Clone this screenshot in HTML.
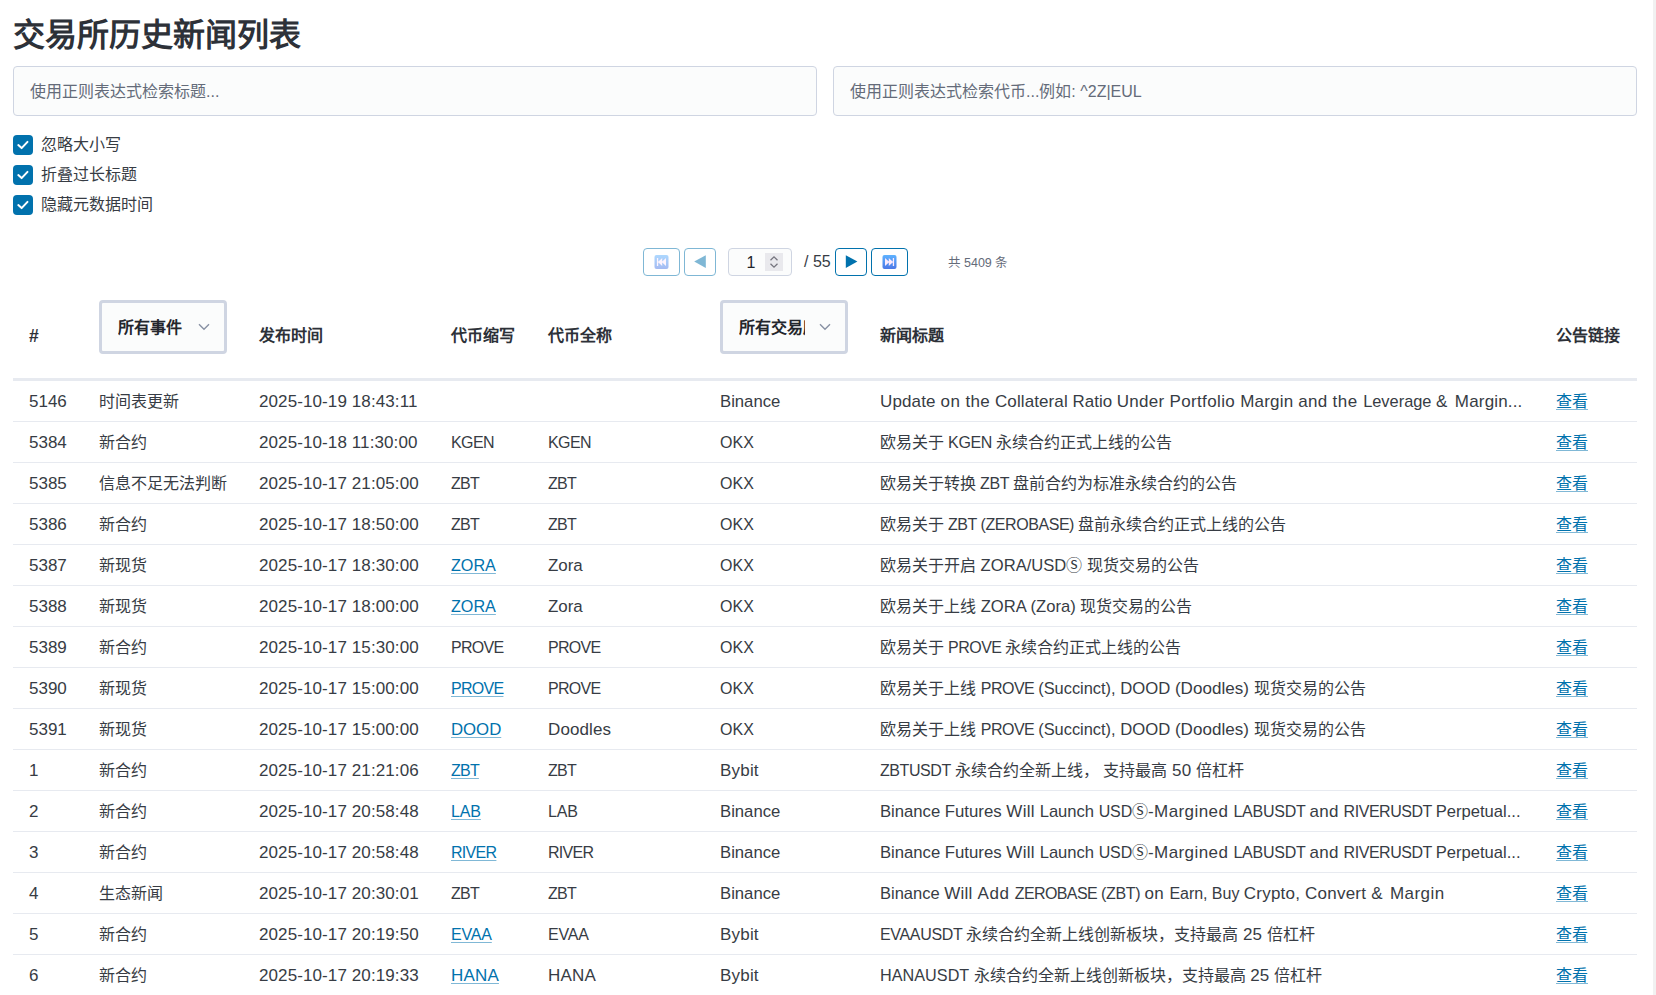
<!DOCTYPE html>
<html lang="zh-CN">
<head>
<meta charset="utf-8">
<title>交易所历史新闻列表</title>
<style>
*{box-sizing:border-box;}
html,body{margin:0;padding:0;background:#fff;}
body{width:1656px;height:995px;overflow:hidden;position:relative;font-family:"Liberation Sans",sans-serif;font-size:16px;color:#373c44;}
.sb{position:absolute;left:1653px;top:0;width:3px;height:995px;background:#f1f1f1;}
h1{position:absolute;left:13px;top:15px;margin:0;font-size:32px;line-height:40px;font-weight:700;color:#2d3138;white-space:nowrap;}
.inp{position:absolute;top:66px;width:804px;height:50px;border:1px solid #cfd5e2;border-radius:4px;background:#fbfcfc;color:#646b79;font-size:16px;line-height:48px;padding:1px 16px 0;white-space:nowrap;overflow:hidden;}
.ck{position:absolute;left:13px;height:20px;white-space:nowrap;}
.ck i{position:absolute;left:0;top:0;width:20px;height:20px;border-radius:4px;background:#0172ad;display:block;}
.ck i svg{position:absolute;left:0;top:0;}
.ck>span{position:absolute;left:28px;top:-2px;line-height:24px;font-size:16px;}
.pg{position:absolute;top:248px;height:28px;}
.btn{border:1px solid #0172ad;border-radius:4px;background:#fff;}
.btn.dis{opacity:.5;}
.btn svg{position:absolute;left:0;top:0;}
.num{border:1px solid #cfd5e2;border-radius:4px;background:#fbfcfc;}
table{position:absolute;left:13px;top:292px;width:1624px;border-collapse:separate;border-spacing:0;table-layout:fixed;}
th,td{padding:2px 16px 0;text-align:left;white-space:nowrap;overflow:hidden;font-size:16px;}
.l{font-size:17px;white-space:pre;line-height:0;}
.c{display:inline-block;white-space:nowrap;text-align:justify;text-align-last:justify;}
th{height:89px;border-bottom:3px solid #e7eaf0;font-weight:700;font-size:16px;color:#2d3138;vertical-align:top;position:relative;}
td{height:41px;border-bottom:1px solid #e7eaf0;line-height:24px;vertical-align:middle;}
a,a .c{color:#0172ad;text-decoration:underline;text-decoration-color:rgba(1,114,173,.5);text-underline-offset:2px;}
.sel{position:absolute;left:16px;top:8px;width:128px;height:54px;border:3px solid #cfd5e2;border-radius:4px;background:#fbfcfc;}
.sel>span{color:#23262c;position:absolute;left:16px;top:13px;line-height:24px;white-space:nowrap;overflow:hidden;}
.sel svg{position:absolute;left:96px;top:20.4px;}
.ht{position:absolute;left:16px;top:32px;line-height:24px;}
</style>
</head>
<body>
<div class="sb"></div>
<h1><span class="c" style="width:288px">交易所历史新闻列表</span></h1>
<div class="inp" style="left:13px"><span class="c" style="width:176px">使用正则表达式检索标题</span>...</div>
<div class="inp" style="left:833px"><span class="c" style="width:176px">使用正则表达式检索代币</span>...<span class="c" style="width:32px">例如</span>: ^2Z|EUL</div>

<div class="ck" style="top:135px"><i><svg width="20" height="20" viewBox="0 0 20 20"><path d="M5.3 10.1l3.3 3 5.9-6.2" fill="none" stroke="#fff" stroke-width="2" stroke-linecap="round" stroke-linejoin="round"/></svg></i><span><span class="c" style="width:80px">忽略大小写</span></span></div>
<div class="ck" style="top:165px"><i><svg width="20" height="20" viewBox="0 0 20 20"><path d="M5.3 10.1l3.3 3 5.9-6.2" fill="none" stroke="#fff" stroke-width="2" stroke-linecap="round" stroke-linejoin="round"/></svg></i><span><span class="c" style="width:96px">折叠过长标题</span></span></div>
<div class="ck" style="top:195px"><i><svg width="20" height="20" viewBox="0 0 20 20"><path d="M5.3 10.1l3.3 3 5.9-6.2" fill="none" stroke="#fff" stroke-width="2" stroke-linecap="round" stroke-linejoin="round"/></svg></i><span><span class="c" style="width:112px">隐藏元数据时间</span></span></div>

<!-- pagination -->
<div class="pg btn dis" style="left:643px;width:37px"><svg width="37" height="28" viewBox="0 0 37 28"><defs><linearGradient id="g1" x1="0" y1="0" x2="0" y2="1"><stop offset="0" stop-color="#5eb2ff"/><stop offset="1" stop-color="#4d78e6"/></linearGradient></defs><rect x="10.5" y="6" width="14" height="14" rx="2" fill="url(#g1)"/><path d="M12.9 8.9h1.3v8.1h-1.3zM18.2 8.9v8.1l-4.3-4.05zM22 8.9v8.1l-4.3-4.05z" fill="#fdeafc"/></svg></div>
<div class="pg btn dis" style="left:684px;width:32px"><svg width="32" height="28" viewBox="0 0 32 28"><path d="M20.8 6.2v12.8l-11.6-6.4z" fill="#0172ad"/></svg></div>
<div class="pg num" style="left:728px;width:64px"><span style="position:absolute;left:17.5px;top:2px;line-height:24px;font-size:16px;color:#23262c">1</span><svg style="position:absolute;left:36px;top:4px" width="18" height="18" viewBox="0 0 18 18"><rect width="18" height="18" fill="#e9e9ed"/><path d="M5.5 7.2L9 3.8l3.5 3.4M5.5 10.8L9 14.2l3.5-3.4" fill="none" stroke="#75757e" stroke-width="1.3"/></svg></div>
<div class="pg" style="left:804px;width:30px;line-height:28px;font-size:16px;white-space:nowrap">/ 55</div>
<div class="pg btn" style="left:835px;width:32px"><svg width="32" height="28" viewBox="0 0 32 28"><path d="M9.8 6.2v12.8l11.6-6.4z" fill="#0172ad"/></svg></div>
<div class="pg btn" style="left:871px;width:37px"><svg width="37" height="28" viewBox="0 0 37 28"><rect x="10.5" y="6" width="14" height="14" rx="2" fill="url(#g1)"/><path d="M22.1 8.9h-1.3v8.1h1.3zM16.8 8.9v8.1l4.3-4.05zM13 8.9v8.1l4.3-4.05z" fill="#fdeafc"/></svg></div>
<div class="pg" style="left:948px;width:70px;line-height:30px;font-size:12.5px;color:#646b79;white-space:nowrap"><span class="c" style="width:12.5px">共</span> 5409 <span class="c" style="width:12.5px">条</span></div>

<table>
<colgroup><col style="width:70px"><col style="width:160px"><col style="width:192px"><col style="width:97px"><col style="width:172px"><col style="width:160px"><col style="width:676px"><col style="width:97px"></colgroup>
<thead><tr>
<th><div class="ht" style="font-size:17.5px">#</div></th>
<th><div class="sel"><span style="width:70px"><span class="c" style="width:64px">所有事件</span></span><svg width="12" height="8" viewBox="0 0 12 8"><path d="M1 1.2l5 5 5-5" fill="none" stroke="#8891a4" stroke-width="1.4"/></svg></div></th>
<th><div class="ht"><span class="c" style="width:64px">发布时间</span></div></th>
<th><div class="ht"><span class="c" style="width:64px">代币缩写</span></div></th>
<th><div class="ht"><span class="c" style="width:64px">代币全称</span></div></th>
<th><div class="sel"><span style="width:66px"><span class="c" style="width:80px">所有交易所</span></span><svg width="12" height="8" viewBox="0 0 12 8"><path d="M1 1.2l5 5 5-5" fill="none" stroke="#8891a4" stroke-width="1.4"/></svg></div></th>
<th><div class="ht"><span class="c" style="width:64px">新闻标题</span></div></th>
<th><div class="ht"><span class="c" style="width:64px">公告链接</span></div></th>
</tr></thead>
<tbody>
<tr><td><span class="l">5146</span></td><td><span class="c" style="width:80px">时间表更新</span></td><td><span class="l" style="letter-spacing:.1px">2025-10-19 18:43:11</span></td><td></td><td></td><td><span class="l" style="font-size:16.7px">Binance</span></td><td><span class="l" style="font-size:17px;letter-spacing:0.14px">Update </span><span class="l" style="font-size:17px;letter-spacing:0.42px">on </span><span class="l" style="font-size:17px;letter-spacing:0.29px">the </span><span class="l" style="font-size:17px;letter-spacing:0.10px">Collateral </span><span class="l" style="font-size:16.9px">Ratio </span><span class="l" style="font-size:17px;letter-spacing:0.28px">Under </span><span class="l" style="font-size:17px;letter-spacing:0.37px">Portfolio </span><span class="l" style="font-size:17px;letter-spacing:0.20px">Margin </span><span class="l" style="font-size:17px;letter-spacing:0.25px">and </span><span class="l" style="font-size:17px;letter-spacing:0.59px">the </span><span class="l" style="font-size:16.4px">Leverage </span><span class="l" style="font-size:17px;letter-spacing:1.36px">&amp; </span><span class="l" style="font-size:17px;letter-spacing:0.17px">Margin...</span></td><td><a><span class="c" style="width:32px">查看</span></a></td></tr>
<tr><td><span class="l">5384</span></td><td><span class="c" style="width:48px">新合约</span></td><td><span class="l" style="letter-spacing:.1px">2025-10-18 11:30:00</span></td><td><span class="l" style="font-size:16px;letter-spacing:-0.61px">KGEN</span></td><td><span class="l" style="font-size:16px;letter-spacing:-0.61px">KGEN</span></td><td><span class="l" style="font-size:16px;letter-spacing:0.03px">OKX</span></td><td><span class="c" style="width:64px">欧易关于</span><span class="l" style="font-size:16px;letter-spacing:-0.37px"> KGEN </span><span class="c" style="width:176px">永续合约正式上线的公告</span></td><td><a><span class="c" style="width:32px">查看</span></a></td></tr>
<tr><td><span class="l">5385</span></td><td><span class="c" style="width:128px">信息不足无法判断</span></td><td><span class="l" style="letter-spacing:.1px">2025-10-17 21:05:00</span></td><td><span class="l" style="font-size:16px;letter-spacing:-0.77px">ZBT</span></td><td><span class="l" style="font-size:16px;letter-spacing:-0.77px">ZBT</span></td><td><span class="l" style="font-size:16px;letter-spacing:0.03px">OKX</span></td><td><span class="c" style="width:96px">欧易关于转换</span><span class="l" style="font-size:16px;letter-spacing:-0.37px"> ZBT </span><span class="c" style="width:224px">盘前合约为标准永续合约的公告</span></td><td><a><span class="c" style="width:32px">查看</span></a></td></tr>
<tr><td><span class="l">5386</span></td><td><span class="c" style="width:48px">新合约</span></td><td><span class="l" style="letter-spacing:.1px">2025-10-17 18:50:00</span></td><td><span class="l" style="font-size:16px;letter-spacing:-0.77px">ZBT</span></td><td><span class="l" style="font-size:16px;letter-spacing:-0.77px">ZBT</span></td><td><span class="l" style="font-size:16px;letter-spacing:0.03px">OKX</span></td><td><span class="c" style="width:64px">欧易关于</span><span class="l" style="font-size:16px;letter-spacing:-0.44px"> ZBT (ZEROBASE) </span><span class="c" style="width:208px">盘前永续合约正式上线的公告</span></td><td><a><span class="c" style="width:32px">查看</span></a></td></tr>
<tr><td><span class="l">5387</span></td><td><span class="c" style="width:48px">新现货</span></td><td><span class="l" style="letter-spacing:.1px">2025-10-17 18:30:00</span></td><td><a><span class="l" style="font-size:16.2px;letter-spacing:-0.03px">ZORA</span></a></td><td><span class="l" style="font-size:16.9px">Zora</span></td><td><span class="l" style="font-size:16px;letter-spacing:0.03px">OKX</span></td><td><span class="c" style="width:96px">欧易关于开启</span><span class="l" style="font-size:16.6px"> ZORA/USD</span><span class="c" style="width:16px">Ⓢ</span><span class="l"> </span><span class="c" style="width:112px">现货交易的公告</span></td><td><a><span class="c" style="width:32px">查看</span></a></td></tr>
<tr><td><span class="l">5388</span></td><td><span class="c" style="width:48px">新现货</span></td><td><span class="l" style="letter-spacing:.1px">2025-10-17 18:00:00</span></td><td><a><span class="l" style="font-size:16.2px;letter-spacing:-0.03px">ZORA</span></a></td><td><span class="l" style="font-size:16.9px">Zora</span></td><td><span class="l" style="font-size:16px;letter-spacing:0.03px">OKX</span></td><td><span class="c" style="width:96px">欧易关于上线</span><span class="l" style="font-size:16.6px;letter-spacing:0.02px"> ZORA (Zora) </span><span class="c" style="width:112px">现货交易的公告</span></td><td><a><span class="c" style="width:32px">查看</span></a></td></tr>
<tr><td><span class="l">5389</span></td><td><span class="c" style="width:48px">新合约</span></td><td><span class="l" style="letter-spacing:.1px">2025-10-17 15:30:00</span></td><td><span class="l" style="font-size:16px;letter-spacing:-0.72px">PROVE</span></td><td><span class="l" style="font-size:16px;letter-spacing:-0.72px">PROVE</span></td><td><span class="l" style="font-size:16px;letter-spacing:0.03px">OKX</span></td><td><span class="c" style="width:64px">欧易关于</span><span class="l" style="font-size:16px;letter-spacing:-0.49px"> PROVE </span><span class="c" style="width:176px">永续合约正式上线的公告</span></td><td><a><span class="c" style="width:32px">查看</span></a></td></tr>
<tr><td><span class="l">5390</span></td><td><span class="c" style="width:48px">新现货</span></td><td><span class="l" style="letter-spacing:.1px">2025-10-17 15:00:00</span></td><td><a><span class="l" style="font-size:16px;letter-spacing:-0.72px">PROVE</span></a></td><td><span class="l" style="font-size:16px;letter-spacing:-0.72px">PROVE</span></td><td><span class="l" style="font-size:16px;letter-spacing:0.03px">OKX</span></td><td><span class="c" style="width:96px">欧易关于上线</span><span class="l" style="font-size:17px;letter-spacing:0.07px"> </span><span class="l" style="font-size:16px;letter-spacing:-0.51px">PROVE </span><span class="l" style="font-size:16.4px">(Succinct), </span><span class="l" style="font-size:16.7px">DOOD </span><span class="l" style="font-size:17px;letter-spacing:0.04px">(Doodles) </span><span class="c" style="width:112px">现货交易的公告</span></td><td><a><span class="c" style="width:32px">查看</span></a></td></tr>
<tr><td><span class="l">5391</span></td><td><span class="c" style="width:48px">新现货</span></td><td><span class="l" style="letter-spacing:.1px">2025-10-17 15:00:00</span></td><td><a><span class="l" style="font-size:16.8px;letter-spacing:-0.03px">DOOD</span></a></td><td><span class="l" style="font-size:17px;letter-spacing:0.12px">Doodles</span></td><td><span class="l" style="font-size:16px;letter-spacing:0.03px">OKX</span></td><td><span class="c" style="width:96px">欧易关于上线</span><span class="l" style="font-size:17px;letter-spacing:0.07px"> </span><span class="l" style="font-size:16px;letter-spacing:-0.51px">PROVE </span><span class="l" style="font-size:16.4px">(Succinct), </span><span class="l" style="font-size:16.7px">DOOD </span><span class="l" style="font-size:17px;letter-spacing:0.04px">(Doodles) </span><span class="c" style="width:112px">现货交易的公告</span></td><td><a><span class="c" style="width:32px">查看</span></a></td></tr>
<tr><td><span class="l">1</span></td><td><span class="c" style="width:48px">新合约</span></td><td><span class="l" style="letter-spacing:.1px">2025-10-17 21:21:06</span></td><td><a><span class="l" style="font-size:16px;letter-spacing:-0.77px">ZBT</span></a></td><td><span class="l" style="font-size:16px;letter-spacing:-0.77px">ZBT</span></td><td><span class="l" style="font-size:17px;letter-spacing:0.20px">Bybit</span></td><td><span class="l" style="font-size:16px;letter-spacing:-0.43px">ZBTUSDT </span><span class="c" style="width:144px">永续合约全新上线，</span><span class="l"> </span><span class="c" style="width:64px">支持最高</span><span class="l" style="font-size:17px;letter-spacing:0.16px"> 50 </span><span class="c" style="width:48px">倍杠杆</span></td><td><a><span class="c" style="width:32px">查看</span></a></td></tr>
<tr><td><span class="l">2</span></td><td><span class="c" style="width:48px">新合约</span></td><td><span class="l" style="letter-spacing:.1px">2025-10-17 20:58:48</span></td><td><a><span class="l" style="font-size:16px;letter-spacing:-0.12px">LAB</span></a></td><td><span class="l" style="font-size:16px;letter-spacing:-0.12px">LAB</span></td><td><span class="l" style="font-size:16.7px">Binance</span></td><td><span class="l" style="font-size:16.7px;letter-spacing:-0.02px">Binance </span><span class="l" style="font-size:16.8px">Futures </span><span class="l" style="font-size:17px;letter-spacing:0.24px">Will </span><span class="l" style="font-size:16.6px">Launch </span><span class="l" style="font-size:16px;letter-spacing:-0.16px">USD</span><span class="c" style="width:16px">Ⓢ</span><span class="l" style="font-size:17px;letter-spacing:0.41px">-Margined </span><span class="l" style="font-size:16px;letter-spacing:-0.22px">LABUSDT </span><span class="l" style="font-size:17px;letter-spacing:0.23px">and </span><span class="l" style="font-size:16px;letter-spacing:-0.46px">RIVERUSDT </span><span class="l" style="font-size:16.6px">Perpetual...</span></td><td><a><span class="c" style="width:32px">查看</span></a></td></tr>
<tr><td><span class="l">3</span></td><td><span class="c" style="width:48px">新合约</span></td><td><span class="l" style="letter-spacing:.1px">2025-10-17 20:58:48</span></td><td><a><span class="l" style="font-size:16px;letter-spacing:-0.70px">RIVER</span></a></td><td><span class="l" style="font-size:16px;letter-spacing:-0.70px">RIVER</span></td><td><span class="l" style="font-size:16.7px">Binance</span></td><td><span class="l" style="font-size:16.7px;letter-spacing:-0.02px">Binance </span><span class="l" style="font-size:16.8px">Futures </span><span class="l" style="font-size:17px;letter-spacing:0.24px">Will </span><span class="l" style="font-size:16.6px">Launch </span><span class="l" style="font-size:16px;letter-spacing:-0.16px">USD</span><span class="c" style="width:16px">Ⓢ</span><span class="l" style="font-size:17px;letter-spacing:0.41px">-Margined </span><span class="l" style="font-size:16px;letter-spacing:-0.22px">LABUSDT </span><span class="l" style="font-size:17px;letter-spacing:0.23px">and </span><span class="l" style="font-size:16px;letter-spacing:-0.46px">RIVERUSDT </span><span class="l" style="font-size:16.6px">Perpetual...</span></td><td><a><span class="c" style="width:32px">查看</span></a></td></tr>
<tr><td><span class="l">4</span></td><td><span class="c" style="width:64px">生态新闻</span></td><td><span class="l" style="letter-spacing:.1px">2025-10-17 20:30:01</span></td><td><span class="l" style="font-size:16px;letter-spacing:-0.77px">ZBT</span></td><td><span class="l" style="font-size:16px;letter-spacing:-0.77px">ZBT</span></td><td><span class="l" style="font-size:16.7px">Binance</span></td><td><span class="l" style="font-size:16.5px">Binance </span><span class="l" style="font-size:17px;letter-spacing:0.24px">Will </span><span class="l" style="font-size:17px;letter-spacing:0.56px">Add </span><span class="l" style="font-size:16px;letter-spacing:-0.60px">ZEROBASE </span><span class="l" style="font-size:16px;letter-spacing:-0.30px">(ZBT) </span><span class="l" style="font-size:17px;letter-spacing:0.45px">on </span><span class="l" style="font-size:16px;letter-spacing:-0.05px">Earn, </span><span class="l" style="font-size:16px">Buy </span><span class="l" style="font-size:17px;letter-spacing:0.21px">Crypto, </span><span class="l" style="font-size:17px;letter-spacing:0.23px">Convert </span><span class="l" style="font-size:17px;letter-spacing:1.36px">&amp; </span><span class="l" style="font-size:17px;letter-spacing:0.46px">Margin</span></td><td><a><span class="c" style="width:32px">查看</span></a></td></tr>
<tr><td><span class="l">5</span></td><td><span class="c" style="width:48px">新合约</span></td><td><span class="l" style="letter-spacing:.1px">2025-10-17 20:19:50</span></td><td><a><span class="l" style="font-size:16px;letter-spacing:-0.18px">EVAA</span></a></td><td><span class="l" style="font-size:16px;letter-spacing:-0.18px">EVAA</span></td><td><span class="l" style="font-size:17px;letter-spacing:0.20px">Bybit</span></td><td><span class="l" style="font-size:16px;letter-spacing:-0.32px">EVAAUSDT </span><span class="c" style="width:272px">永续合约全新上线创新板块，支持最高</span><span class="l" style="font-size:17px;letter-spacing:0.04px"> 25 </span><span class="c" style="width:48px">倍杠杆</span></td><td><a><span class="c" style="width:32px">查看</span></a></td></tr>
<tr><td><span class="l">6</span></td><td><span class="c" style="width:48px">新合约</span></td><td><span class="l" style="letter-spacing:.1px">2025-10-17 20:19:33</span></td><td><a><span class="l" style="font-size:17px;letter-spacing:0.17px">HANA</span></a></td><td><span class="l" style="font-size:17px;letter-spacing:0.17px">HANA</span></td><td><span class="l" style="font-size:17px;letter-spacing:0.20px">Bybit</span></td><td><span class="l" style="font-size:16.2px;letter-spacing:0.03px">HANAUSDT </span><span class="c" style="width:272px">永续合约全新上线创新板块，支持最高</span><span class="l" style="font-size:17px;letter-spacing:0.04px"> 25 </span><span class="c" style="width:48px">倍杠杆</span></td><td><a><span class="c" style="width:32px">查看</span></a></td></tr>
</tbody>
</table>
</body>
</html>
